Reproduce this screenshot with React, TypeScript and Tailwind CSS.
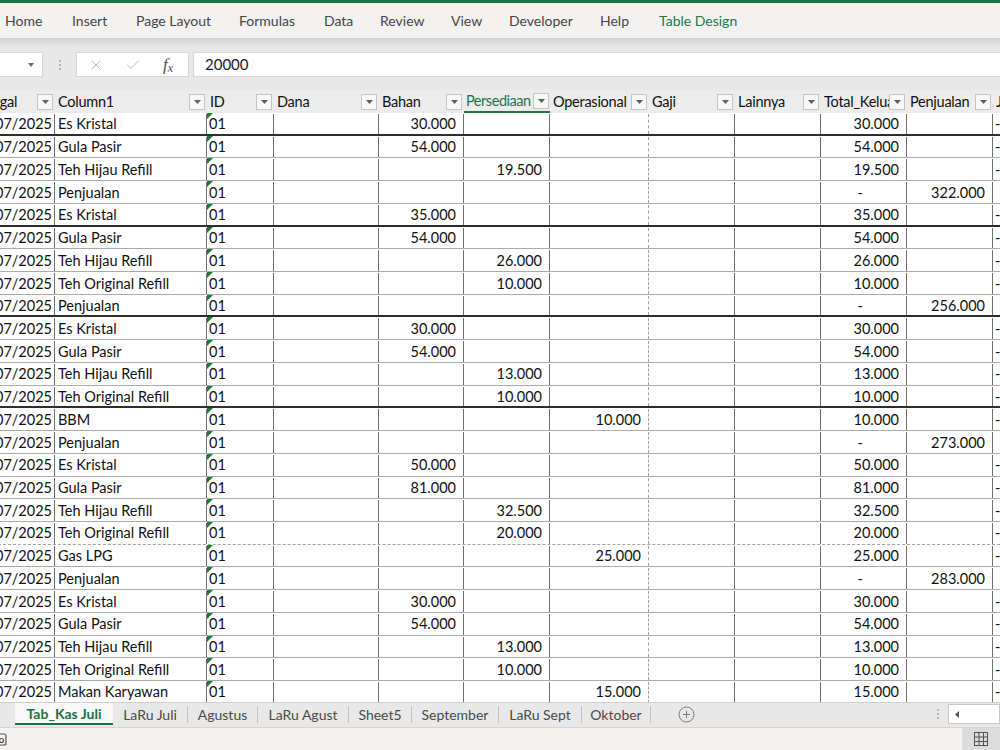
import { X, Check } from "lucide-react";

const RIBBON = [
  { label: "Home", w: "w-[67px]" },
  { label: "Insert", w: "w-[64px]" },
  { label: "Page Layout", w: "w-[103px]" },
  { label: "Formulas", w: "w-[85px]" },
  { label: "Data", w: "w-[56px]" },
  { label: "Review", w: "w-[71px]" },
  { label: "View", w: "w-[58px]" },
  { label: "Developer", w: "w-[91px]" },
  { label: "Help", w: "w-[59px]" },
];

const COLS = [
  { key: "date", w: "w-[87px]", head: "Tanggal" },
  { key: "desc", w: "w-[152px]", head: "Column1" },
  { key: "id", w: "w-[67px]", head: "ID" },
  { key: "dana", w: "w-[105px]", head: "Dana" },
  { key: "bahan", w: "w-[85px]", head: "Bahan" },
  { key: "pers", w: "w-[86px]", head: "Persediaan" },
  { key: "ops", w: "w-[99px]", head: "Operasional" },
  { key: "gaji", w: "w-[86px]", head: "Gaji" },
  { key: "lain", w: "w-[86px]", head: "Lainnya" },
  { key: "total", w: "w-[86px]", head: "Total_Keluar" },
  { key: "jual", w: "w-[86px]", head: "Penjualan" },
  { key: "j", w: "w-[80px]", head: "Jumlah" },
];

type Row = { desc: string; bahan?: string; pers?: string; ops?: string; jual?: string };

const ROWS: Row[] = [
  { desc: "Es Kristal", bahan: "30.000" },
  { desc: "Gula Pasir", bahan: "54.000" },
  { desc: "Teh Hijau Refill", pers: "19.500" },
  { desc: "Penjualan", jual: "322.000" },
  { desc: "Es Kristal", bahan: "35.000" },
  { desc: "Gula Pasir", bahan: "54.000" },
  { desc: "Teh Hijau Refill", pers: "26.000" },
  { desc: "Teh Original Refill", pers: "10.000" },
  { desc: "Penjualan", jual: "256.000" },
  { desc: "Es Kristal", bahan: "30.000" },
  { desc: "Gula Pasir", bahan: "54.000" },
  { desc: "Teh Hijau Refill", pers: "13.000" },
  { desc: "Teh Original Refill", pers: "10.000" },
  { desc: "BBM", ops: "10.000" },
  { desc: "Penjualan", jual: "273.000" },
  { desc: "Es Kristal", bahan: "50.000" },
  { desc: "Gula Pasir", bahan: "81.000" },
  { desc: "Teh Hijau Refill", pers: "32.500" },
  { desc: "Teh Original Refill", pers: "20.000" },
  { desc: "Gas LPG", ops: "25.000" },
  { desc: "Penjualan", jual: "283.000" },
  { desc: "Es Kristal", bahan: "30.000" },
  { desc: "Gula Pasir", bahan: "54.000" },
  { desc: "Teh Hijau Refill", pers: "13.000" },
  { desc: "Teh Original Refill", pers: "10.000" },
  { desc: "Makan Karyawan", ops: "15.000" },
];

const SHEETS = [
  { label: "LaRu Juli", w: "w-[75px]" },
  { label: "Agustus", w: "w-[70px]" },
  { label: "LaRu Agust", w: "w-[91px]" },
  { label: "Sheet5", w: "w-[63px]" },
  { label: "September", w: "w-[87px]" },
  { label: "LaRu Sept", w: "w-[83px]" },
  { label: "Oktober", w: "w-[69px]" },
];

const DARK_ROWS = [0, 4, 8, 12];

function FilterBtn({ tight }: { tight?: boolean }) {
  return (
    <span
      className={`shrink-0 ${tight ? "mr-[1px]" : "mr-[2px]"} w-[16px] h-[16px] border border-[#c4c4c4] bg-[#f8f8f8] flex items-center justify-center`}
    >
      <svg width="7" height="4" viewBox="0 0 7 4">
        <path d="M0 0h7L3.5 4z" fill="#5f5f5f" />
      </svg>
    </span>
  );
}

function Num({ v, w, dashed }: { v?: string; w: string; dashed?: boolean }) {
  return (
    <div
      className={`${w} shrink-0 flex items-center justify-end pr-[7px] ${dashed ? "border-r border-dashed border-[#a3a3a3]" : "border-r border-[#6f6f6f]"}`}
    >
      {v}
    </div>
  );
}

function DataRow({ r, i }: { r: Row; i: number }) {
  const rowBorder = DARK_ROWS.includes(i)
    ? "border-b-2 border-[#2e2e2e]"
    : i === 18
      ? "border-b border-dashed border-[#a3a3a3]"
      : "border-b border-[#ababab]";
  const total = r.bahan || r.pers || r.ops;
  return (
    <div className={`flex h-[22.72px] shrink-0 bg-white pt-px ${rowBorder}`}>
      <div className="w-[87px] shrink-0 flex items-center justify-end pr-[2px] overflow-hidden border-r border-[#6f6f6f]">
        <span className="shrink-0 whitespace-nowrap">01/07/2025</span>
      </div>
      <div className="w-[152px] shrink-0 flex items-center pl-[3px] whitespace-nowrap border-r border-[#6f6f6f]">
        {r.desc}
      </div>
      <div className="relative w-[67px] shrink-0 flex items-center pl-[2px] border-r border-[#6f6f6f]">
        <svg className="absolute top-[-1px] left-0" width="6" height="6" viewBox="0 0 6 6">
          <path d="M0 0h6L0 6z" fill="#1d7a36" />
        </svg>
        01
      </div>
      <Num w="w-[105px]" />
      <Num w="w-[85px]" v={r.bahan} />
      <Num w="w-[86px]" v={r.pers} />
      <Num w="w-[99px]" v={r.ops} dashed />
      <Num w="w-[86px]" />
      <Num w="w-[86px]" />
      {total ? (
        <Num w="w-[86px]" v={total} />
      ) : (
        <div className="w-[86px] shrink-0 flex items-center justify-end pr-[43px] border-r border-[#6f6f6f]">-</div>
      )}
      <Num w="w-[86px]" v={r.jual} />
      <div className="w-[80px] shrink-0 flex items-center pl-[2px]">{r.jual ? "" : "-"}</div>
    </div>
  );
}

export default function App() {
  return (
    <div className="w-[1000px] h-[750px] overflow-hidden flex flex-col bg-[#e8e8e8] font-['Lato',sans-serif] text-[#111]">
      {/* title strip */}
      <div className="h-[3px] shrink-0 bg-[#1e7145]" />

      {/* ribbon tabs */}
      <div className="h-[35px] shrink-0 flex items-center pl-[5px] bg-[#f3f2f1] text-[14px] text-[#454545]">
        {RIBBON.map((t) => (
          <span key={t.label} className={`${t.w} shrink-0 whitespace-nowrap`}>
            {t.label}
          </span>
        ))}
        <span className="text-[#21784a] whitespace-nowrap">Table Design</span>
      </div>
      <div className="h-[8px] shrink-0 bg-gradient-to-b from-[#d2d2d2] to-[#e3e3e3]" />

      {/* formula bar */}
      <div className="h-[44px] shrink-0 flex items-start pt-[6px]">
        <div className="w-[43px] h-[25px] bg-white border-y border-r border-[#d6d6d6] flex items-center justify-end pr-[8px]">
          <svg width="6" height="4" viewBox="0 0 6 4">
            <path d="M0 0h6L3 4z" fill="#6b6b6b" />
          </svg>
        </div>
        <div className="w-[33px] h-[25px] flex flex-col items-center justify-center gap-[2px]">
          <span className="w-[2px] h-[2px] bg-[#b4b4b4]" />
          <span className="w-[2px] h-[2px] bg-[#b4b4b4]" />
          <span className="w-[2px] h-[2px] bg-[#b4b4b4]" />
        </div>
        <div className="w-[113px] h-[25px] bg-white border border-[#d6d6d6] flex items-center pl-[11px]">
          <X size={16} strokeWidth={1.2} className="text-[#a3a3a3]" />
          <Check size={16} strokeWidth={1.2} className="ml-[21px] text-[#a3a3a3]" />
          <span className="ml-[22px] font-['Liberation_Serif',serif] italic text-[17px] text-[#505050] leading-none">
            f<span className="text-[12px] relative top-[2px]">x</span>
          </span>
        </div>
        <div className="ml-[4px] flex-1 h-[25px] bg-white border-y border-l border-[#d6d6d6] flex items-center pl-[11px] text-[15px] text-[#222]">
          20000
        </div>
      </div>

      {/* sheet grid */}
      <div className="h-[612px] shrink-0 overflow-hidden text-[14.5px]">
        <div className="ml-[-32px] flex flex-col">
          <div className="flex h-[23px] shrink-0 bg-[#ececec] pt-px">
            {COLS.map((c) => {
              const sel = c.key === "pers";
              return (
                <div
                  key={c.key}
                  className={`${c.w} shrink-0 flex items-center ${sel ? "border-b-2 border-[#217346] text-[#217346] pl-[2px]" : "pl-[3px]"}`}
                >
                  <span
                    className={`flex-1 min-w-0 overflow-hidden whitespace-nowrap ${sel ? "tracking-[-0.45px]" : "tracking-[-0.25px]"}`}
                  >
                    {c.head}
                  </span>
                  <FilterBtn tight={sel} />
                </div>
              );
            })}
          </div>
          {ROWS.map((r, i) => (
            <DataRow key={i} r={r} i={i} />
          ))}
        </div>
      </div>

      {/* sheet tabs */}
      <div className="h-[25px] shrink-0 flex items-stretch pb-[2px] bg-[#e8e8e8] text-[14px] text-[#4a4a4a] border-t border-[#d0d0d0]">
        <div className="w-[15px] shrink-0" />
        <div className="w-[98px] shrink-0 flex items-center justify-center bg-[#f8f8f8] border-b-2 border-[#1e7145] font-bold text-[#1e7145]">
          Tab_Kas Juli
        </div>
        {SHEETS.map((s) => (
          <div key={s.label} className={`${s.w} shrink-0 flex items-center`}>
            <span className="flex-1 text-center whitespace-nowrap">{s.label}</span>
            <span className="w-px h-[17px] bg-[#c2c2c2]" />
          </div>
        ))}
        <div className="w-[70px] shrink-0 flex items-center justify-center">
          <svg width="17" height="17" viewBox="0 0 17 17">
            <circle cx="8.5" cy="8.5" r="7.5" fill="none" stroke="#7a7a7a" strokeWidth="1" />
            <path d="M8.5 5v7M5 8.5h7" stroke="#7a7a7a" strokeWidth="1" />
          </svg>
        </div>
        <div className="flex-1" />
        <div className="w-[14px] flex flex-col items-center justify-center gap-[2px]">
          <span className="w-[2px] h-[2px] bg-[#b4b4b4]" />
          <span className="w-[2px] h-[2px] bg-[#b4b4b4]" />
          <span className="w-[2px] h-[2px] bg-[#b4b4b4]" />
        </div>
        <div className="ml-[3px] my-[1px] w-[52px] bg-white border border-[#c8c8c8] flex items-center pl-[6px]">
          <svg width="4" height="7" viewBox="0 0 4 7">
            <path d="M4 0v7L0 3.5z" fill="#555" />
          </svg>
        </div>
      </div>

      {/* status bar */}
      <div className="flex-1 flex items-center bg-[#f3f2f1] border-t border-[#d4d4d4]">
        <svg className="ml-[-4px]" width="11" height="13" viewBox="0 0 11 13">
          <rect x="1" y="1" width="9" height="11" rx="2" fill="none" stroke="#555" strokeWidth="1.2" />
          <circle cx="5.5" cy="7.5" r="2" fill="none" stroke="#555" strokeWidth="1.2" />
        </svg>
        <div className="flex-1" />
        <div className="w-[38px] h-full bg-[#dcdcdc] flex items-center justify-center">
          <svg width="16" height="16" viewBox="0 0 16 16">
            <rect x="1.5" y="1.5" width="13" height="13" fill="none" stroke="#555" strokeWidth="1" />
            <path d="M6 1.5v13M10.5 1.5v13M1.5 6h13M1.5 10.5h13" stroke="#555" strokeWidth="1" />
          </svg>
        </div>
      </div>
    </div>
  );
}
